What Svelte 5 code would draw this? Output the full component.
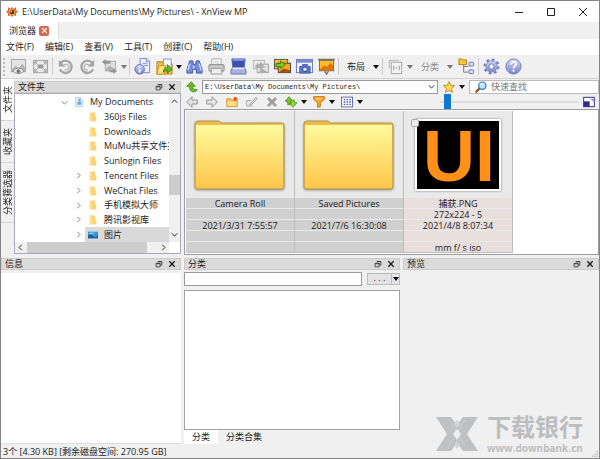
<script>
    const menus = ['文件(F)', '编辑(E)', '查看(V)', '工具(T)', '创建(C)', '帮助(H)']
    const sideTabs = ['文件夹', '收藏夹', '分类筛选器']
    const tree = [
        { name: '360js Files', open: false },
        { name: 'Downloads', open: false },
        { name: 'MuMu共享文件夹', open: false },
        { name: 'Sunlogin Files', open: false },
        { name: 'Tencent Files', open: true },
        { name: 'WeChat Files', open: true },
        { name: '手机模拟大师', open: true },
        { name: '腾讯影视库', open: true },
    ]
    const files = [
        { name: 'Camera Roll', kind: 'folder', lines: ['Camera Roll', '', '2021/3/31 7:55:57', '', ''] },
        { name: 'Saved Pictures', kind: 'folder', lines: ['Saved Pictures', '', '2021/7/6 16:30:08', '', ''] },
        { name: '捕获.PNG', kind: 'image', lines: ['捕获.PNG', '272x224 - 5', '2021/4/8 8:07:34', '', 'mm f/ s iso'] },
    ]
    const toolbar = [
        { icon: 'view', label: 'View' },
        { icon: 'full', label: 'Full screen' },
        { sep: true },
        { icon: 'left', label: 'Rotate left' },
        { icon: 'right', label: 'Rotate right' },
        { icon: 'jpeg', label: 'Transform' },
        { caret: 'gray', label: 'Transform options' },
        { sep: true },
        { icon: 'info', label: 'Properties' },
        { icon: 'open', label: 'Open with' },
        { caret: 'dark', label: 'Open with options' },
        { icon: 'find', label: 'Search' },
        { icon: 'print', label: 'Print' },
        { icon: 'scan', label: 'Scan' },
        { icon: 'convert', label: 'Convert' },
        { icon: 'batch', label: 'Batch convert' },
        { icon: 'capture', label: 'Capture' },
        { icon: 'slides', label: 'Slideshow' },
        { sep: true },
        { text: '布局', caret: 'dark' },
        { sep: true },
        { icon: 'pages', label: 'Sort' },
        { caret: 'gray', label: 'Sort options' },
        { text: '分类', caret: 'gray', off: true },
        { icon: 'tree', label: 'Tree' },
        { sep: true },
        { icon: 'gear', label: 'Settings' },
        { icon: 'help', label: 'Help' },
    ]
    const navTools = [
        { icon: 'back', label: 'Back' },
        { icon: 'forward', label: 'Forward' },
        { icon: 'newfolder', label: 'New folder' },
        { icon: 'rename', label: 'Rename' },
        { icon: 'delete', label: 'Delete' },
        { icon: 'sort', label: 'Sort by', caret: true },
        { icon: 'filter', label: 'Filter', caret: true },
        { icon: 'grid', label: 'View as', caret: true },
    ]

    let path = $state('E:\\UserData\\My Documents\\My Pictures\\')
    let query = $state('')
    let category = $state('')
    let size = $state(3)
    let sideTab = $state(0)
    let catTab = $state(0)
</script>

{#snippet icon(name)}
    <svg class="icon" viewBox="0 0 18 18" aria-hidden="true">
        {#if name === 'view'}
            <rect x="1.5" y="1.5" width="15" height="13" fill="#e4e4e4" stroke="#a2a2a2" />
            <path d="M2 12l4-4 3 3 4-5 3 4v4H2z" fill="#b5b5b5" />
            <path d="M3 14q6-7 12 0q-6 5-12 0z" fill="#f2f2f2" stroke="#888" />
            <circle cx="9" cy="14" r="2" fill="#777" />
        {:else if name === 'full'}
            <rect x="1.5" y="2.5" width="15" height="13" fill="#ececec" stroke="#a0a0a0" />
            <rect x="6" y="7" width="6" height="4" fill="#999" />
            <path d="M3 7V4h3M12 4h3v3M15 11v3h-3M6 14H3v-3M3 4l3 3M15 4l-3 3M15 14l-3-3M3 14l3-3" fill="none" stroke="#999" />
        {:else if name === 'left' || name === 'right'}
            <g transform={name === 'right' ? 'translate(18 0) scale(-1 1)' : ''}>
                <path d="M4 5a6.5 6.5 0 1 1-1 7" fill="none" stroke="#a6a6a6" stroke-width="2.6" />
                <path d="M2 2v7h7z" fill="#a4a4a4" />
                <path d="M6.5 9.5a3 3 0 1 1 2 3" fill="none" stroke="#b8b8b8" stroke-width="1.4" />
            </g>
        {:else if name === 'jpeg'}
            <rect x="4.5" y="3.5" width="11" height="10" fill="#ddd" stroke="#aaa" />
            <path d="M5 12l4-4 6 4v2H5z" fill="#b0b0b0" />
            <path d="M1 4l4-3v2h5v3H5v2zM17 14l-4 3v-6zM9 13h5v2H9z" fill="#989898" />
        {:else if name === 'info'}
            <path d="M6.5.5h7l3 3v12h-10z" fill="#edf1ff" stroke="#7b86c4" />
            <path d="M13 1v3h3M9 6h5M11 8h4" stroke="#7b86c4" fill="none" />
            <circle cx="6" cy="12" r="5" fill="url(#orb)" stroke="#5966b7" />
            <path d="M6 11.5v4M6 8.5v1.5" stroke="#fff" stroke-width="1.8" />
        {:else if name === 'open'}
            <path d="M1 4h6l1 2h9v11H1z" fill="#f0bd37" stroke="#b78320" />
            <path d="M8 1h8v12H8z" fill="#f5f8ff" stroke="#8793bf" />
            <path d="M1 17l2-9h7l-1 9z" fill="#ffe278" stroke="#c99327" />
            <path d="M8 15c0-4 2-5 4-5V7l5 5-5 4v-3c-2 0-3 1-4 2z" fill="#62bd1d" stroke="#398109" />
        {:else if name === 'find'}
            <path d="M4 3h3l1 4h2l1-4h3l3 9v4h-6v-4H7v4H1v-4z" fill="#748ad9" stroke="#4355ab" />
            <path d="M4 6l-2 7M14 6l2 7M8 8v3" stroke="#d2dcff" stroke-width="1.5" />
        {:else if name === 'print'}
            <path d="M4 8V1h10v7" fill="#fafafa" stroke="#aaa" />
            <rect x="1" y="7" width="16" height="7" rx="1" fill="#c9c9c9" stroke="#888" />
            <path d="M4 11h10l1 6H3z" fill="#eee" stroke="#999" />
            <path d="M6 3.5h6M6 5.5h6" stroke="#ccc" />
        {:else if name === 'scan'}
            <path d="M2 1h14l-1 9H3z" fill="#3c50b0" stroke="#5364ae" />
            <path d="M3 1h12v2H3z" fill="#8998dc" />
            <path d="M3 10h12l2 3v4H1v-4z" fill="#a7b2df" stroke="#6875b3" />
            <path d="M3 11h12" stroke="#eef2ff" stroke-width="1.5" />
        {:else if name === 'convert'}
            <rect x="1.5" y="2.5" width="12" height="9" fill="#e9e9e9" stroke="#b5b5b5" />
            <rect x="5.5" y="6.5" width="12" height="9" fill="#e0e0e0" stroke="#a8a8a8" />
            <path d="M7 15l4-3 6 3z" fill="#aaa" />
            <path d="M4 8h5V5l4 4-4 4v-3H4z" fill="#b4b4b4" stroke="#999" stroke-width=".6" />
        {:else if name === 'batch'}
            <rect x=".5" y="1.5" width="14" height="10" fill="#ffbb28" stroke="#555" />
            <rect x="4.5" y="5.5" width="13" height="10" fill="#f8a81c" stroke="#444" />
            <path d="M5 15l5-4 7 2v2z" fill="#a2500a" />
            <path d="M2 6h5V3l5 4-5 4V9H2z" fill="#7bd02b" stroke="#397d0d" />
        {:else if name === 'capture'}
            <rect x=".5" y="1.5" width="17" height="14" fill="#f1f4ff" stroke="#6b78bd" />
            <path d="M1 2h16v3H1z" fill="#7c8cd4" />
            <path d="M4 9h2l1-2h5l1 2h2v7H4z" fill="#617ace" stroke="#4359ab" />
            <circle cx="9.5" cy="12" r="2.5" fill="#d9ecff" stroke="#233b92" />
        {:else if name === 'slides'}
            <path d="M0 1.5h18M7 14l2 3 2-3" stroke="#777" stroke-width="1.5" fill="none" />
            <rect x="1.5" y="2.5" width="15" height="11" fill="#ffbd27" stroke="#77664a" />
            <path d="M2 12l4-4 4 1 3-4 3 3v5H2z" fill="#dc760e" />
        {:else if name === 'pages'}
            <path d="M2.5 11V2.5h10" fill="none" stroke="#b5b5b5" />
            <rect x="4.5" y="4.5" width="11" height="12" fill="#f4f4f4" stroke="#a6a6a6" />
            <path d="M7 8v5M13 8v5M9 10.5h2" stroke="#999" />
        {:else if name === 'tree'}
            <path d="M6 7v8h5M6 9h5" fill="none" stroke="#777" />
            <path d="M1 1h3l1 1h4v5H1z" fill="#ffc839" stroke="#b47c16" />
            <rect x="11.5" y="4.5" width="5" height="4" rx="1" fill="#d9e0ff" stroke="#6474b2" />
            <rect x="11.5" y="12.5" width="5" height="4" rx="1" fill="#d9e0ff" stroke="#6474b2" />
        {:else if name === 'gear'}
            <circle cx="9" cy="9" r="7.3" fill="none" stroke="#6e7fc4" stroke-width="2.4" stroke-dasharray="2.87 2.87" />
            <circle cx="9" cy="9" r="6" fill="url(#orb)" stroke="#7f8dca" />
            <circle cx="9" cy="9" r="2.8" fill="#f2f2f8" stroke="#6474bd" />
        {:else if name === 'help'}
            <circle cx="9" cy="9" r="8" fill="url(#orb)" stroke="#727bb9" />
            <path d="M6.5 7q0-3 2.7-3t2.6 2.5c0 2-2.8 2-2.8 4.5M9 12.5v2" fill="none" stroke="#fff" stroke-width="1.8" />
        {:else if name === 'back' || name === 'forward'}
            <path transform={name === 'forward' ? 'translate(18 0) scale(-1 1)' : ''} d="M1 9l8-8v5h8v6H9v5z" fill="#e2e2e2" stroke="#969696" stroke-width="1.5" />
        {:else if name === 'newfolder'}
            <path d="M1 4h6l1 2h9v10H1z" fill="#f6bc4d" stroke="#c98b2c" />
            <path d="M2 8h14v7H2z" fill="#ffdc86" />
            <circle cx="14" cy="4.5" r="3" fill="#e75a1d" />
        {:else if name === 'rename'}
            <path d="M1 7h7M1 15h9M1 7v8M6 12L15 2l2 2-9 9-3 1z" fill="#ddd" stroke="#aaa" stroke-width="1.5" />
        {:else if name === 'delete'}
            <path d="M3 3l12 12M15 3L3 15" stroke="#a0a0a0" stroke-width="4.5" />
        {:else if name === 'sort'}
            <path d="M0 8l6-7 6 7H9v5H4V8z" fill="#7cc62c" stroke="#397d0c" />
            <path d="M18 10l-6 7-6-6h3V6h5v4z" fill="#95d73c" stroke="#397d0c" />
        {:else if name === 'filter'}
            <path d="M1 1h16v4l-6 5v6l-4 1v-7L1 5z" fill="#ffa72a" stroke="#bd6a0b" stroke-width="1.4" />
            <path d="M4 4h9" stroke="#ffe2a5" stroke-width="1.5" />
        {:else if name === 'grid'}
            <rect x=".7" y="1.7" width="16.6" height="14.6" fill="#fff" stroke="#5b68aa" stroke-width="1.4" />
            <path d="M4 5.5h11M4 9h11M4 12.5h11" stroke="#4c5fc0" stroke-width="2" stroke-dasharray="2.5 1.7" />
        {:else if name === 'up'}
            <path d="M1 8l7-7 6 7h-4c0 4 2 5 7 5-3 5-12 5-12-5z" fill="#68bd20" stroke="#36790b" />
        {:else if name === 'star'}
            <path d="M9 1l2.4 5.4 6 .6-4.5 4 1.3 6L9 14l-5.200 3 1.300-6-4.500-4 6-.6z" fill="#ffdc55" stroke="#c17d13" stroke-width="1.3" />
        {:else if name === 'search'}
            <path d="M7 11l-5 5" stroke="#93582a" stroke-width="3.5" stroke-linecap="round" />
            <circle cx="11" cy="7" r="5.5" fill="#b8e3ff" stroke="#3a76b9" stroke-width="1.8" />
            <path d="M8 6q1-3 4-2" stroke="#fff" fill="none" stroke-width="1.5" />
        {:else if name === 'fit'}
            <rect x="1" y="2" width="16" height="14" fill="#fff" stroke="#35358c" stroke-width="1.5" />
            <path d="M1 8h9v8H1z" fill="#2d2d87" />
            <path d="M12 5h3v3" stroke="#35358c" fill="none" />
        {:else if name === 'logo'}
            <path d="M9 1l2 3 4-2v4l3 3-3 2v4l-4-1-2 3-2-3-4 1v-4l-3-2 3-3V2l4 2z" fill="#df692b" />
            <circle cx="9" cy="9" r="5" fill="#f6a048" />
            <circle cx="9" cy="9" r="3.500" fill="#51321e" />
            <circle cx="8" cy="8" r="1.300" fill="#fff" />
        {:else if name === 'float'}
            <path d="M6.5 3.5h9v8h-4M6 4h10M2.5 7.5h9v8h-9zM2 8.5h10" fill="none" stroke="#333" stroke-width="1.8" />
        {:else if name === 'close'}
            <path d="M3 3l12 12M15 3L3 15" stroke="currentColor" stroke-width="3" />
        {:else if name === 'chev'}
            <path d="M6 2l7 7-7 7" fill="none" stroke="currentColor" stroke-width="2.4" />
        {:else if name === 'folder'}
            <path d="M3 1h10v7h2v9H3z" fill="#f7d476" />
            <path d="M3 1h3v16H3z" fill="#ffe7a2" />
        {:else if name === 'doc'}
            <path d="M3 1h9l4 4v12H3z" fill="#e6f1f8" stroke="#9ab2c0" />
            <path d="M6 8h7v6H6zM8 3h4v4H8z" fill="#63acd9" />
        {:else if name === 'picture'}
            <rect y="3" width="18" height="12" fill="#3293d6" />
            <path d="M0 11q5-5 9 0t9-2v6H0z" fill="#1b5d91" />
            <path d="M2 6h9" stroke="#a6daff" stroke-width="2" />
        {/if}
    </svg>
{/snippet}

{#snippet dockHead(title)}
    <header class="dock-head">
        <h2>{title}</h2>
        <button aria-label="Float {title}">{@render icon('float')}</button>
        <button aria-label="Close {title}">{@render icon('close')}</button>
    </header>
{/snippet}

<svg class="defs" aria-hidden="true">
    <defs>
        <linearGradient id="orb" x1="0" y1="0" x2="0" y2="1">
            <stop offset="0" stop-color="#d5daf6" />
            <stop offset="1" stop-color="#7682c6" />
        </linearGradient>
        <linearGradient id="folder-fill" x1="0" y1="0" x2="0" y2="1">
            <stop offset="0" stop-color="#fffa9c" />
            <stop offset="1" stop-color="#ffc64b" />
        </linearGradient>
    </defs>
</svg>

<div class="window">
    <div class="titlebar">
        {@render icon('logo')}
        <h1>E:\UserData\My Documents\My Pictures\ - XnView MP</h1>
        <button aria-label="Minimize"><svg viewBox="0 0 10 10"><path d="M1 5.500h8" /></svg></button>
        <button aria-label="Maximize"><svg viewBox="0 0 10 10"><path d="M1.500 1.500h7v7h-7z" /></svg></button>
        <button aria-label="Close"><svg viewBox="0 0 10 10"><path d="M1 1l8 8M9 1L1 9" /></svg></button>
    </div>

    <div class="doc-tabs">
        <div class="doc-tab">
            <span>浏览器</span>
            <button aria-label="Close tab">{@render icon('close')}</button>
        </div>
    </div>

    <nav class="menubar">
        {#each menus as menu}
            <button>{menu}</button>
        {/each}
    </nav>

    <div class="toolbar">
        <span class="grip"></span>
        {#each toolbar as item}
            {#if item.sep}
                <span class="sep"></span>
            {:else if item.icon}
                <button class="tool" aria-label={item.label}>{@render icon(item.icon)}</button>
            {:else if item.text}
                <button class="tool-text" class:off={item.off}>{item.text}<i class="caret {item.caret}"></i></button>
            {:else}
                <button class="drop" aria-label={item.label}><i class="caret {item.caret}"></i></button>
            {/if}
        {/each}
    </div>

    <main>
        <section class="upper">
            <div class="side-tabs">
                {#each sideTabs as tab, i}
                    <button class:active={sideTab === i} onclick={() => sideTab = i}>{tab}</button>
                {/each}
            </div>

            <div class="tree-dock">
                {@render dockHead('文件夹')}
                <div class="tree-body">
                    <ul>
                        <li class="root">
                            <span class="twist down">{@render icon('chev')}</span>
                            <button>{@render icon('doc')}My Documents</button>
                        </li>
                        {#each tree as node}
                            <li>
                                <span class="twist">{#if node.open}{@render icon('chev')}{/if}</span>
                                <button>{@render icon('folder')}{node.name}</button>
                            </li>
                        {/each}
                        <li class="current">
                            <span class="twist">{@render icon('chev')}</span>
                            <button>{@render icon('picture')}图片</button>
                        </li>
                    </ul>
                    <div class="vscroll">
                        <span class="arrow up">{@render icon('chev')}</span>
                        <span class="thumb"></span>
                        <span class="arrow down">{@render icon('chev')}</span>
                    </div>
                    <div class="hscroll">
                        <span class="arrow left">{@render icon('chev')}</span>
                        <span class="thumb"></span>
                        <span class="arrow">{@render icon('chev')}</span>
                    </div>
                </div>
            </div>

            <div class="browser">
                <div class="address">
                    <button class="nav" aria-label="Up">{@render icon('up')}</button>
                    <label class="path">
                        <input aria-label="Path" bind:value={path} />
                        <span class="arrow down">{@render icon('chev')}</span>
                    </label>
                    <button class="nav fav" aria-label="Favourites">{@render icon('star')}<i class="caret dark"></i></button>
                    <label class="search">
                        {@render icon('search')}
                        <input aria-label="Search" placeholder="快速查找" bind:value={query} />
                    </label>
                </div>
                <div class="nav-row">
                    {#each navTools as tool}
                        <button class="nav" class:wide={tool.caret} aria-label={tool.label}>
                            {@render icon(tool.icon)}
                            {#if tool.caret}<i class="caret dark"></i>{/if}
                        </button>
                    {/each}
                    <input class="zoom" type="range" min="0" max="100" aria-label="Thumbnail size" bind:value={size} />
                    <button class="nav" aria-label="Fit">{@render icon('fit')}</button>
                </div>
                <div class="files">
                    {#each files as file}
                        <article class={file.kind}>
                            <div class="thumbnail">
                                {#if file.kind === 'folder'}
                                    <svg viewBox="0 0 94 72" role="img" aria-label={file.name}>
                                        <path d="M2 5q0-3 3-3h20q2 0 3 2h61q2 0 2 2v62q0 2-2 2H4q-2 0-2-2z" fill="#eabc50" stroke="#b9964a" />
                                        <path d="M3 6h87v62q0 1-1 1H4q-1 0-1-1z" fill="url(#folder-fill)" />
                                    </svg>
                                {:else}
                                    <input type="checkbox" aria-label="Select {file.name}" />
                                    <div class="photo">UI</div>
                                {/if}
                            </div>
                            <div class="caption">
                                {#each file.lines as line}
                                    <span>{line}</span>
                                {/each}
                            </div>
                        </article>
                    {/each}
                </div>
            </div>
        </section>

        <section class="lower">
            <div class="dock">
                {@render dockHead('信息')}
                <div class="info-body"></div>
            </div>
            <div class="dock">
                {@render dockHead('分类')}
                <div class="cat-row">
                    <input aria-label="Category filter" bind:value={category} />
                    <button aria-label="Category options">
                        <span>. . .</span>
                        <span class="split"><i class="caret dark"></i></span>
                    </button>
                </div>
                <div class="cat-list"></div>
                <div class="cat-tabs">
                    {#each ['分类', '分类合集'] as tab, i}
                        <button class:active={catTab === i} onclick={() => catTab = i}>{tab}</button>
                    {/each}
                </div>
            </div>
            <div class="dock">
                {@render dockHead('预览')}
            </div>
        </section>
    </main>

    <footer>
        <span>3个 [4.30 KB] [剩余磁盘空间: 270.95 GB]</span>
        <svg viewBox="0 0 8 8" aria-hidden="true">
            <path d="M6 0h2v2H6zM3 3h2v2H3zM6 3h2v2H6zM0 6h2v2H0zM3 6h2v2H3zM6 6h2v2H6z" />
        </svg>
    </footer>

    <div class="brand">
        <svg viewBox="0 0 42 34" aria-hidden="true">
            <path d="M0 0h15l6 8 6-8h15L31 17l11 17H27l-6-8-6 8H0l11-17z" fill="#bfc0c2" />
            <path d="M13 3l17 27M29 3L12 30" stroke="#cfd0d2" />
            <path d="M21 12l4 5-4 6-4-6z" fill="#eee" />
            <path d="M21 3l3 4-3 4-3-4zM21 24l3 4-3 4-3-4z" fill="#d3d4d6" />
        </svg>
        <div>
            <strong>下载银行</strong>
            <span>www.downbank.cn</span>
        </div>
    </div>
</div>

<style>
    :global(body) {
        margin: 0;
        background: #f0f0f0;
    }

    .window {
        position: relative;
        box-sizing: border-box;
        display: flex;
        flex-direction: column;
        height: 100vh;
        border: 1px solid #858585;
        background: #f0f0f0;
        color: #1c1c1c;
        font-family: "Open Sans", "Noto Sans CJK SC", sans-serif;
        font-size: 9px;
        line-height: 12px;
        overflow: hidden;
    }

    .window *, .window *::before {
        box-sizing: border-box;
    }

    .defs {
        position: absolute;
        width: 0;
        height: 0;
    }

    button, input {
        margin: 0;
        padding: 0;
        border: 0;
        background: none;
        color: inherit;
        font: inherit;
        outline: none;
    }

    input {
        min-width: 0;
    }

    h1, h2 {
        margin: 0;
        font-size: inherit;
        font-weight: normal;
    }

    .icon {
        display: block;
        flex: none;
        width: 12px;
        height: 12px;
    }

    .caret {
        border: 3px solid transparent;
        border-top: 4px solid #111;
        border-bottom: 0;
    }

    .caret.gray {
        border-top-color: #777;
    }

    .titlebar {
        display: flex;
        align-items: center;
        flex: none;
        height: 21px;
        padding-left: 5px;
        background: #fff;
    }

    .titlebar h1 {
        flex: 1;
        margin-left: 4px;
        font-size: 9px;
    }

    .titlebar button {
        display: grid;
        place-items: center;
        width: 32px;
        height: 20px;
    }

    .titlebar button svg {
        width: 10px;
        height: 10px;
        fill: none;
        stroke: #222;
    }

    .doc-tabs {
        display: flex;
        flex: none;
        height: 17px;
    }

    .doc-tab {
        display: flex;
        align-items: center;
        gap: 3px;
        padding: 0 9px 0 8px;
        border-right: 1px solid #ddd;
        background: #fff;
    }

    .doc-tab button {
        display: grid;
        place-items: center;
        width: 10px;
        height: 10px;
        border-radius: 2px;
        background: #d46a50;
        color: #fff;
    }

    .doc-tab .icon {
        width: 7px;
        height: 7px;
    }

    .menubar {
        display: flex;
        flex: none;
        gap: 11px;
        height: 16px;
        padding-left: 5px;
        background: #fff;
    }

    .toolbar {
        display: flex;
        align-items: center;
        flex: none;
        height: 24px;
        border-bottom: 1px solid #d2d2d2;
    }

    .toolbar .icon {
        width: 17px;
        height: 17px;
    }

    .grip {
        width: 2px;
        height: 18px;
        margin: 0 2px;
        border-left: 2px dotted #bbb;
    }

    .sep {
        width: 1px;
        height: 17px;
        margin: 0 1px;
        background: #ccc;
    }

    .tool {
        display: grid;
        place-items: center;
        width: 22px;
        height: 22px;
    }

    .drop {
        display: grid;
        place-items: center;
        width: 8px;
        height: 22px;
    }

    .tool-text {
        display: flex;
        align-items: center;
        gap: 8px;
        padding: 0 2px 0 7px;
    }

    .tool-text.off {
        color: #888;
    }

    main {
        display: flex;
        flex: 1;
        flex-direction: column;
        min-height: 0;
    }

    .upper {
        display: flex;
        flex: none;
        height: 175px;
    }

    .side-tabs {
        display: flex;
        flex-direction: column;
        width: 13px;
    }

    .side-tabs button {
        width: 13px;
        padding: 7px 0;
        border-top: 1px solid #d5d5d5;
        writing-mode: vertical-rl;
        text-orientation: sideways;
        transform: rotate(180deg);
    }

    .side-tabs .active {
        background: #fff;
    }

    .tree-dock {
        display: flex;
        flex-direction: column;
        width: 167px;
        padding-top: 2px;
    }

    .dock-head {
        display: flex;
        align-items: center;
        flex: none;
        gap: 5px;
        height: 12px;
        padding: 0 4px 0 3px;
        border: 1px solid #ccc;
        background: #dadada;
    }

    .dock-head h2 {
        flex: 1;
    }

    .dock-head .icon {
        width: 8px;
        height: 8px;
    }

    .tree-body {
        display: grid;
        flex: 1;
        grid-template: minmax(0, 1fr) 11px / minmax(0, 1fr) 11px;
        border: 1px solid #a5a8b5;
        background: #fff;
    }

    ul {
        display: grid;
        grid-auto-rows: 1fr;
        margin: 0;
        padding: 1px 0 0;
        list-style: none;
        overflow: hidden;
    }

    li {
        display: flex;
        align-items: center;
        min-height: 0;
        padding-left: 58px;
        white-space: nowrap;
    }

    li.root {
        padding-left: 44px;
    }

    li button {
        display: flex;
        align-items: center;
        flex: 1;
        align-self: stretch;
        gap: 6px;
        padding-left: 3px;
    }

    li .icon {
        width: 10px;
        height: 10px;
    }

    .current button {
        background: #d9d9d9;
    }

    .twist {
        width: 12px;
        padding-left: 2px;
        color: #777;
    }

    .twist .icon, .arrow .icon {
        width: 7px;
        height: 7px;
    }

    .down .icon {
        transform: rotate(90deg);
    }

    .up .icon {
        transform: rotate(-90deg);
    }

    .left .icon {
        transform: rotate(180deg);
    }

    .vscroll, .hscroll {
        display: flex;
        align-items: center;
        justify-content: space-between;
        padding: 4px 2px;
        background: #f0f0f0;
    }

    .vscroll {
        flex-direction: column;
        padding: 4px 0;
    }

    .vscroll .thumb {
        width: 11px;
        height: 20px;
        margin-top: 70px;
        margin-bottom: auto;
        background: #cdcdcd;
    }

    .hscroll .thumb {
        width: 120px;
        height: 11px;
        margin-right: auto;
        margin-left: 3px;
        background: #cdcdcd;
    }

    .browser {
        display: flex;
        flex: 1;
        flex-direction: column;
        min-width: 0;
        padding-left: 1px;
    }

    .address, .nav-row {
        display: flex;
        align-items: center;
        flex: none;
        height: 15px;
    }

    .nav {
        display: flex;
        align-items: center;
        justify-content: center;
        flex: none;
        gap: 4px;
        width: 20px;
        height: 15px;
    }

    .nav.wide {
        width: 28px;
    }

    .nav .icon {
        width: 12px;
        height: 12px;
    }

    .path, .search {
        display: flex;
        align-items: center;
        min-width: 0;
        height: 14px;
        border: 1px solid #999;
        background: #fff;
    }

    .path {
        flex: 238;
        padding-right: 2px;
    }

    .path input {
        flex: 1;
        width: 100%;
        padding-left: 2px;
        font-family: "Liberation Mono", monospace;
        font-size: 7px;
    }

    .fav {
        width: 31px;
    }

    .search {
        flex: 126;
        gap: 4px;
        padding-left: 5px;
        border-color: #bbb;
    }

    .search input {
        flex: 1;
        width: 100%;
    }

    .search input::placeholder {
        color: #777;
    }

    .zoom {
        flex: 1;
        height: 15px;
        margin-left: 74px;
        appearance: none;
    }

    .zoom::-webkit-slider-runnable-track {
        height: 2px;
        background: #dedede;
    }

    .zoom::-webkit-slider-thumb {
        width: 7px;
        height: 15px;
        margin-top: -7px;
        background: #0f78d4;
        appearance: none;
    }

    .files {
        display: flex;
        flex: 1;
        align-items: flex-start;
        margin-left: 2px;
        padding: 1px;
        border: 1px solid #9c9ca2;
        background: #fff;
    }

    article {
        width: 109px;
        border-right: 1px solid #bdbdbd;
        border-bottom: 1px solid #bdbdbd;
        background: #e9e9e9;
    }

    .thumbnail {
        position: relative;
        display: grid;
        place-items: center;
        height: 87px;
    }

    .thumbnail svg {
        width: 94px;
        height: 72px;
        filter: drop-shadow(0 1px 1px #999);
    }

    .thumbnail input {
        position: absolute;
        top: 8px;
        left: 7px;
        width: 8px;
        height: 8px;
        border: 1px solid #aaa;
        border-radius: 2px;
        background: #eee;
        appearance: none;
    }

    .photo {
        width: 86px;
        height: 72px;
        padding-left: 6px;
        border: 2px solid #fff;
        background: #000;
        box-shadow: 0 0 2px #777;
        color: #ff9018;
        font-family: "Liberation Sans", sans-serif;
        font-size: 72px;
        font-weight: bold;
        line-height: 70px;
    }

    .caption {
        text-align: center;
    }

    .caption span {
        display: block;
        height: 10px;
        margin-bottom: 1px;
        background: #d0d0d0;
        line-height: 11px;
    }

    .caption span:last-child {
        margin: 0;
    }

    .image .caption span {
        background: #e8dedc;
    }

    .lower {
        display: grid;
        flex: 1;
        grid-template-columns: 180px 216px minmax(0, 1fr);
        gap: 3px;
        min-height: 0;
        padding-top: 4px;
    }

    .dock {
        display: flex;
        flex-direction: column;
        min-height: 0;
    }

    .info-body {
        flex: 1;
        margin-top: 3px;
        border-bottom: 1px solid #ddd;
        background: #fff;
    }

    .cat-row {
        display: flex;
        gap: 5px;
        margin-top: 2px;
    }

    .cat-row input {
        flex: 1;
        height: 14px;
        border: 1px solid #999;
        background: #fff;
    }

    .cat-row button {
        display: flex;
        width: 33px;
        height: 12px;
        margin-top: 1px;
        border: 1px solid #bbb;
        background: #e3e3e3;
        line-height: 8px;
    }

    .cat-row button span {
        flex: 1;
    }

    .cat-row .split {
        display: grid;
        place-items: center;
        flex: none;
        align-self: stretch;
        width: 8px;
        border-left: 1px solid #bbb;
    }

    .cat-list {
        flex: 1;
        margin-top: 4px;
        border: 1px solid #a2a2a2;
        background: #fff;
    }

    .cat-tabs {
        display: flex;
    }

    .cat-tabs button {
        height: 14px;
        padding: 0 8px;
    }

    .cat-tabs .active {
        background: #fff;
    }

    footer {
        display: flex;
        align-items: flex-end;
        justify-content: space-between;
        flex: none;
        height: 14px;
        padding: 0 1px 0 2px;
    }

    footer svg {
        width: 6px;
        height: 8px;
        fill: #c4c4c4;
    }

    .brand {
        position: absolute;
        right: 16px;
        bottom: 4px;
        display: flex;
        align-items: center;
        gap: 9px;
        color: #bcbdbf;
    }

    .brand svg {
        width: 42px;
        height: 34px;
    }

    .brand strong, .brand span {
        display: block;
    }

    .brand strong {
        font-family: "Liberation Sans", "Noto Sans CJK SC", sans-serif;
        font-size: 24px;
        line-height: 28px;
    }

    .brand span {
        font-size: 10px;
        font-weight: bold;
    }
</style>
